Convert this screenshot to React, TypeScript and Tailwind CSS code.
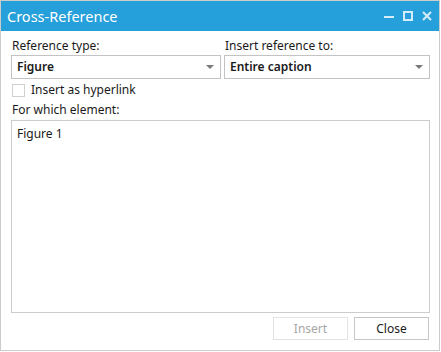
import React from "react";

const font = { fontFamily: '"Noto Sans", "Open Sans", sans-serif' };

function Select({ value, width }: { value: string; width: string }) {
  return (
    <div className={`${width} h-[24px] border border-[#c3c3c3] bg-white flex items-center justify-between pl-[5px] pr-[6px]`}>
      <span className="text-[12px] font-semibold text-[#1a1a1a] leading-none">{value}</span>
      <svg width="8" height="4" viewBox="0 0 8 4">
        <polygon points="0,0 8,0 4,4" fill="#7a7a7a" />
      </svg>
    </div>
  );
}

export default function App() {
  return (
    <div className="w-[441px] h-[352px] bg-white" style={font}>
      <div className="w-[440px] h-[351px] border border-[#cccccc] flex flex-col bg-white">
        <div className="h-[30px] bg-[#26a0da] flex items-center justify-between pl-[6px] pr-[7px]">
          <span className="text-white text-[14.5px] leading-none">Cross-Reference</span>
          <div className="flex items-center gap-[9px] text-[#d4edf9]">
            <svg width="10" height="10" viewBox="0 0 10 10">
              <rect x="0" y="5" width="10" height="2" fill="#d4edf9" />
            </svg>
            <svg width="10" height="10" viewBox="0 0 10 10">
              <rect x="1" y="1" width="8" height="8" fill="none" stroke="#d4edf9" strokeWidth="2" />
            </svg>
            <svg width="10" height="10" viewBox="0 0 10 10">
              <path d="M1 1 L9 9 M9 1 L1 9" stroke="#d4edf9" strokeWidth="2" />
            </svg>
          </div>
        </div>
        <div className="flex-1 flex flex-col pl-[10px] pt-[7px]">
          <div className="flex gap-[3px]">
            <div className="flex flex-col">
              <div className="text-[12px] leading-[16px] h-[16px] mb-[1px] pl-[1px] text-[#1a1a1a]">Reference type:</div>
              <Select value="Figure" width="w-[210px]" />
            </div>
            <div className="flex flex-col">
              <div className="text-[12px] leading-[16px] h-[16px] mb-[1px] pl-[1px] text-[#1a1a1a]">Insert reference to:</div>
              <Select value="Entire caption" width="w-[206px]" />
            </div>
          </div>
          <div className="flex items-center mt-[4px] pl-[1px] h-[14px]">
            <div className="w-[13px] h-[13px] border border-[#cfcfcf] bg-white" />
            <span className="ml-[6px] text-[12px] leading-none text-[#1a1a1a]">Insert as hyperlink</span>
          </div>
          <div className="mt-[5px] text-[12px] leading-[16px] h-[16px] pl-[1px] text-[#1a1a1a]">For which element:</div>
          <div className="mt-[2px] w-[419px] h-[193px] border border-[#cccccc] pl-[5px] pt-[5px]">
            <div className="text-[12px] leading-[16px] text-[#1a1a1a]">Figure 1</div>
          </div>
          <div className="flex justify-end gap-[6px] w-[418px] mt-[4px]">
            <div className="w-[75px] h-[23px] border border-[#e3e3e3] flex items-center justify-center text-[12px] text-[#a6a6a6]">Insert</div>
            <div className="w-[75px] h-[23px] border border-[#c6c6c6] flex items-center justify-center text-[12px] text-[#1a1a1a]">Close</div>
          </div>
        </div>
      </div>
    </div>
  );
}
